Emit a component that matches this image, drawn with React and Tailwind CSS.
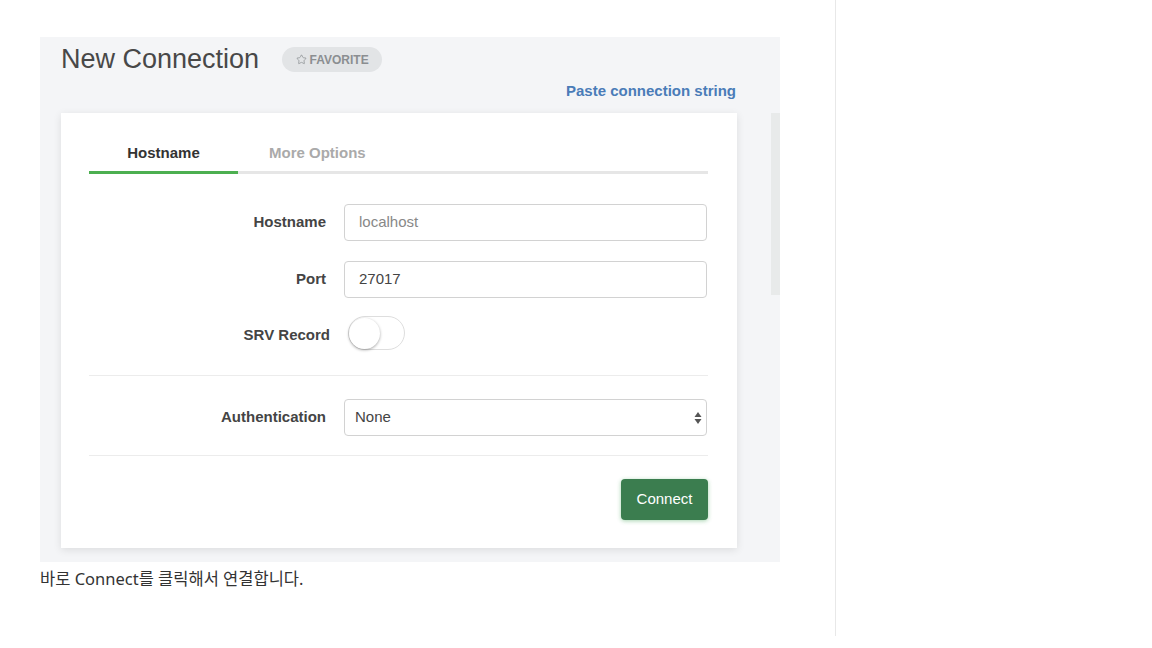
import { Star } from "lucide-react";

const ui = { fontFamily: '"Liberation Sans", Arial, sans-serif' };

const FieldRow = ({ label, labelWidth = "w-[237px]", labelClass = "", children, className = "" }) => (
  <div className={`flex items-center ${className}`}>
    <label className={`${labelWidth} ${labelClass} shrink-0 text-right text-[15px] font-bold text-[#444]`}>{label}</label>
    <div className="ml-[18px] flex-1">{children}</div>
  </div>
);

const SelectArrows = () => (
  <svg width="8" height="14" viewBox="0 0 8 14" className="text-[#555]">
    <path d="M4 1 L7.5 6 H0.5 Z" fill="currentColor" />
    <path d="M4 13 L7.5 8 H0.5 Z" fill="currentColor" />
  </svg>
);

const ConnectCard = () => (
  <div className="w-[676px] h-[435px] bg-white shadow-[0_2px_8px_rgba(0,0,0,0.10)] px-[28px] pt-[30px]" style={ui}>
    {/* tabs */}
    <div className="w-[619px]">
      <div className="flex h-[20px] items-center text-[15px] font-bold">
        <div className="w-[149px] text-center text-[#333]">Hostname</div>
        <div className="pl-[31px] text-[#aaa]">More Options</div>
      </div>
      <div className="mt-[8px] flex h-[3px] bg-[#e6e6e6]">
        <div className="w-[149px] bg-[#4caf50]" />
      </div>
    </div>

    <div className="w-[619px]">
      <FieldRow label="Hostname" className="mt-[30px]">
        <div className="h-[37px] w-[363px] rounded-[4px] border border-[#d2d2d2] pl-[14px] flex items-center text-[15px] text-[#888]">
          localhost
        </div>
      </FieldRow>
      <FieldRow label="Port" className="mt-[20px]">
        <div className="h-[37px] w-[363px] rounded-[4px] border border-[#d2d2d2] pl-[14px] flex items-center text-[15px] text-[#444]">
          27017
        </div>
      </FieldRow>
      <FieldRow label="SRV Record" labelWidth="w-[241px]" labelClass="mt-[5px]" className="mt-[18px]">
        <div className="h-[34px] w-[57px] rounded-full border border-[#dedede] bg-white flex items-center">
          <div className="h-[31px] w-[31px] rounded-full bg-white shadow-[0_1px_3px_rgba(0,0,0,0.35)]" />
        </div>
      </FieldRow>

      <div className="mt-[25px] h-px bg-[#ececec]" />

      <FieldRow label="Authentication" className="mt-[23px]">
        <div className="h-[37px] w-[363px] rounded-[4px] border border-[#d2d2d2] pl-[10px] pr-[4px] flex items-center justify-between text-[15px] text-[#444]">
          <span>None</span>
          <SelectArrows />
        </div>
      </FieldRow>

      <div className="mt-[19px] h-px bg-[#ececec]" />

      <div className="mt-[23px] flex justify-end">
        <button className="h-[41px] w-[87px] rounded-[4px] bg-[#3b7d4f] text-[15px] text-white shadow-[0_1px_4px_rgba(60,160,80,0.45)]">
          Connect
        </button>
      </div>
    </div>
  </div>
);

export default function App() {
  return (
    <div className="flex h-[636px] w-[1152px] bg-white">
      <div className="w-[836px] shrink-0 border-r border-[#e8e8e8] pl-[40px] pt-[37px]">
        <div className="flex h-[525px] w-[740px] flex-col bg-[#f4f5f7]" style={ui}>
          <div className="pl-[21px] pt-[10px]">
            <div className="flex h-[25px] items-center">
              <h1 className="text-[27px] leading-[25px] text-[#484848]">New Connection</h1>
              <span className="ml-[23px] flex h-[25px] w-[100px] items-center justify-center gap-[3px] rounded-full bg-[#e2e4e6] text-[12px] font-bold text-[#8b8e91]">
                <Star size={11} strokeWidth={1.6} />
                FAVORITE
              </span>
            </div>
          </div>
          <div className="mt-[9px] flex h-[20px] items-center justify-end pr-[44px]">
            <a className="text-[15px] font-bold text-[#4a7cb8]">Paste connection string</a>
          </div>
          <div className="mt-[12px] flex pl-[21px]">
            <ConnectCard />
            <div className="ml-auto h-[182px] w-[9px] bg-[#e8eaea]" />
          </div>
        </div>
        <p
          className="mt-[5px] text-[16.5px] text-[#333]"
          style={{ fontFamily: '"Noto Sans", "Noto Sans CJK KR", sans-serif' }}
        >
          바로 Connect를 클릭해서 연결합니다.
        </p>
      </div>
    </div>
  );
}
